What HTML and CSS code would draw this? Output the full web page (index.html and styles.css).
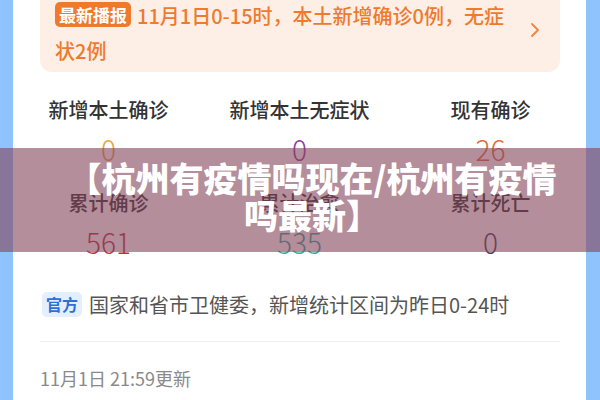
FILE: index.html
```html
<!DOCTYPE html>
<html lang="zh-CN">
<head>
  <meta charset="UTF-8" />
  <meta name="viewport" content="width=device-width, initial-scale=1.0"/>
  <title>杭州有疫情吗现在</title>
  <link rel="stylesheet" href="styles.css">
</head>
<body>
  <div class="card">
    <div class="notice">
      <span class="notice-tag">最新播报</span>11月1日0-15时，本土新增确诊0例，无症状2例
      <svg class="notice-arrow" width="12" height="18" viewBox="0 0 12 18">
        <path d="M3 3 L9 9 L3 15" fill="none" stroke="#f0843c" stroke-width="1.8" stroke-linecap="round" stroke-linejoin="round"/>
      </svg>
    </div>

    <div class="stats">
      <div class="stat">
        <div class="stat-label">新增本土确诊</div>
        <div class="stat-num gold">0</div>
      </div>
      <div class="stat">
        <div class="stat-label">新增本土无症状</div>
        <div class="stat-num purple">0</div>
      </div>
      <div class="stat">
        <div class="stat-label">现有确诊</div>
        <div class="stat-num orange">26</div>
      </div>
      <div class="stat">
        <div class="stat-label">累计确诊</div>
        <div class="stat-num red">561</div>
      </div>
      <div class="stat">
        <div class="stat-label">累计治愈</div>
        <div class="stat-num teal">535</div>
      </div>
      <div class="stat">
        <div class="stat-label">累计死亡</div>
        <div class="stat-num dark">0</div>
      </div>
    </div>

    <div class="source">
      <span class="source-tag">官方</span>
      <span class="source-text">国家和省市卫健委，新增统计区间为昨日0-24时</span>
    </div>

    <div class="divider"></div>

    <div class="updated">11月1日 21:59更新</div>
  </div>

  <!-- title banner laid over the data card -->
  <div class="banner">
    <h1 class="banner-title">【杭州有疫情吗现在/杭州有疫情吗最新】</h1>
  </div>
</body>
</html>
```

FILE: styles.css
```css
body {
  margin: 0;
  height: 400px;
  overflow: hidden;
  background: #8fc3fd;
  font-family: "Noto Sans CJK SC", "Noto Sans", sans-serif;
}

.card {
  margin: 0 14px 0 13px;
  height: 400px;
  background: #fff;
  overflow: hidden;
}

/* orange news strip at the top */
.notice {
  position: relative;
  margin: -20px 26px 0 27px;
  padding: 18px 50px 4px 15px;
  background: #fdeee6;
  border-radius: 12px;
  color: #ee7a2e;
  font-size: 20px;
  font-weight: 500;
  line-height: 35px;
}

.notice-tag {
  display: inline-block;
  height: 25px;
  padding: 0 4px;
  margin-right: 6px;
  border-radius: 5px;
  background: #f07a2c;
  color: #fff;
  font-size: 17px;
  font-weight: bold;
  line-height: 25px;
  vertical-align: 2px;
}

.notice-arrow {
  position: absolute;
  right: 19px;
  top: 41px;
}

/* numbers */
.stats {
  display: grid;
  grid-template-columns: repeat(3, 1fr);
  row-gap: 20px;
  margin-top: 24px;
  text-align: center;
}

.stat-label {
  font-size: 20px;
  font-weight: 500;
  line-height: 28px;
  color: #333;
}

.stat-num {
  margin-top: 5px;
  font-size: 28px;
  font-weight: 300;
  line-height: 40px;
}

.gold { color: #e8a54a; }
.purple { color: #8e3fa6; }
.orange { color: #e46a3c; }
.red { color: #b8323e; }
.teal { color: #3aa69c; }
.dark { color: #4a4358; }

.source {
  display: flex;
  align-items: center;
  gap: 7px;
  margin: 30px 26px 0 29px;
}

.source-tag {
  height: 25px;
  padding: 0 4px;
  border-radius: 5px;
  background: #e3effd;
  color: #2f6fd6;
  font-size: 16px;
  font-weight: bold;
  line-height: 25px;
}

.source-text {
  font-size: 20px;
  color: #555;
  line-height: 25px;
}

.divider {
  height: 1px;
  margin: 24px 26px 0 27px;
  background: #eee;
}

.updated {
  margin: 24px 0 0 27px;
  font-size: 18px;
  line-height: 24px;
  color: #8a8a8a;
}

.banner {
  position: absolute;
  top: 148px;
  left: 0;
  right: 0;
  height: 104px;
  background: rgba(130, 66, 88, 0.6);
}

.banner-title {
  margin: 0;
  padding: 11px 38px 0 62px;
  color: #fff;
  font-size: 34px;
  font-weight: 900;
  line-height: 37px;
  text-align: center;
}
```
